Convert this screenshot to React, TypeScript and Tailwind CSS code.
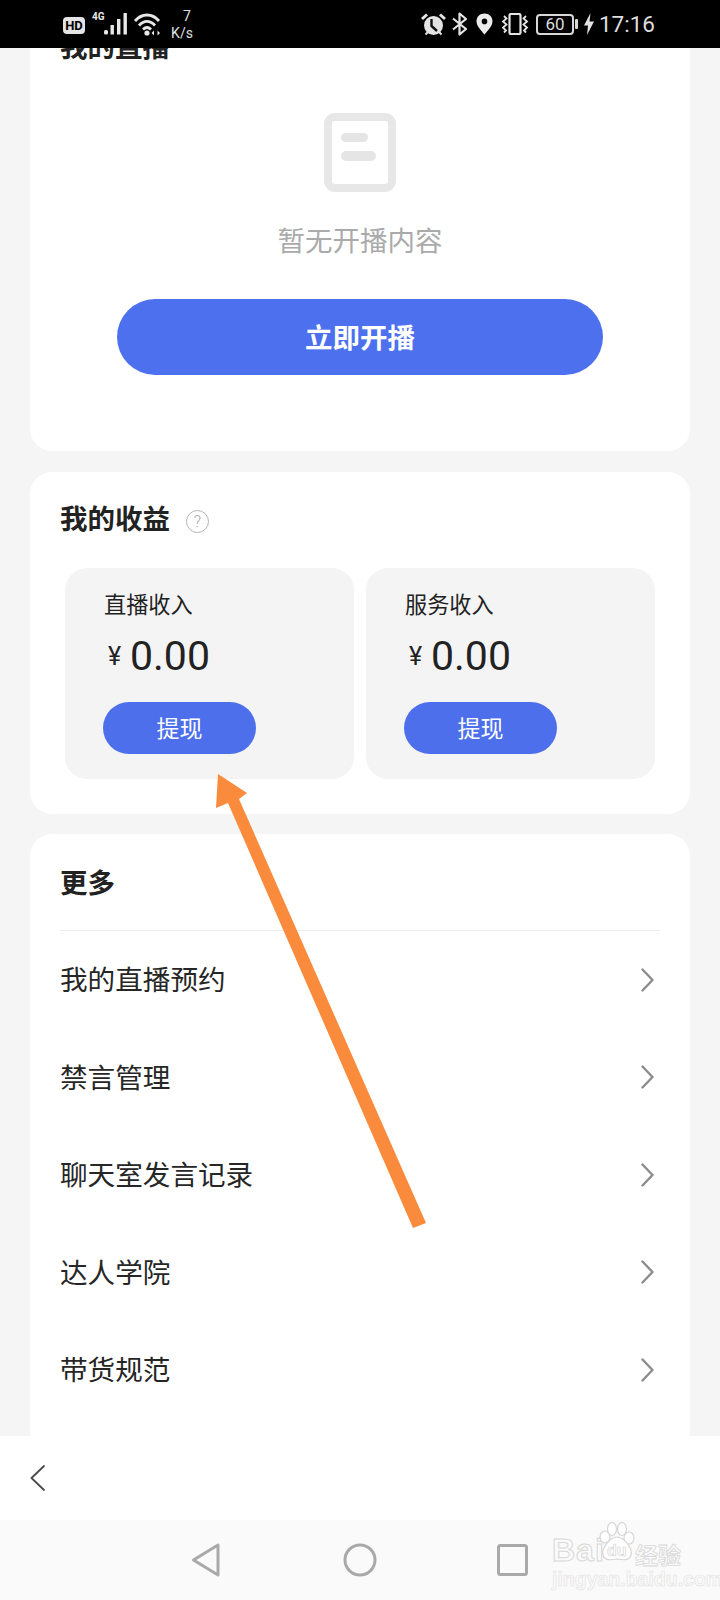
import React from "react";

const ff = "font-['Roboto','Noto_Sans_CJK_SC',sans-serif]";

function Chevron() {
  return (
    <svg width="13" height="24" viewBox="0 0 13 24" fill="none" stroke="#8c8c8c" strokeWidth="2.4" strokeLinecap="round" strokeLinejoin="round">
      <path d="M1.5 1.5 L11.5 12 L1.5 22.5" />
    </svg>
  );
}

function Signal() {
  return (
    <svg width="24" height="22" viewBox="0 0 24 22" fill="#e8e8e8">
      <rect x="0" y="17" width="4" height="4.5" rx="1.5" />
      <rect x="6.5" y="12" width="3.4" height="9.5" />
      <rect x="13" y="6" width="3.4" height="15.5" />
      <rect x="19.5" y="0" width="3.4" height="21.5" />
    </svg>
  );
}

function Wifi() {
  return (
    <svg width="28" height="23" viewBox="0 0 28 23" fill="none" stroke="#e8e8e8" strokeWidth="2.8">
      <path d="M1 8 C8 0 18 0 25 8" />
      <path d="M5 12.5 C10 7 16 7 21 12.5" />
      <path d="M9 16.5 C11.5 14 14.5 14 17 16.5" />
      <circle cx="13" cy="20" r="2.6" fill="#e8e8e8" stroke="none" />
      <path d="M20 17.5v5l-2.5-2.5zM23.5 17.5v5l2.5-2.5z" fill="#e8e8e8" stroke="none" />
    </svg>
  );
}

function Alarm() {
  return (
    <svg width="25" height="23" viewBox="0 0 25 23" fill="none">
      <circle cx="12.5" cy="12.5" r="9.5" fill="#e4e4e4" />
      <path d="M1 6 L6 1.5 M24 6 L19 1.5" stroke="#e4e4e4" strokeWidth="3" />
      <path d="M4.5 21.5 L7 19 M20.5 21.5 L18 19" stroke="#e4e4e4" strokeWidth="2" />
      <path d="M10.5 6 V13 L16 18" stroke="#111" strokeWidth="2.4" />
    </svg>
  );
}

function Bluetooth() {
  return (
    <svg width="16" height="24" viewBox="0 0 16 24" fill="none" stroke="#e4e4e4" strokeWidth="2.2" strokeLinejoin="round">
      <path d="M1 6.5 L14 17 L7.5 22.5 V1.5 L14 7 L1 17.5" />
    </svg>
  );
}

function Pin() {
  return (
    <svg width="17" height="22" viewBox="0 0 17 22">
      <path fillRule="evenodd" fill="#ececec" d="M8.5 0.5 C13.2 0.5 16.5 3.8 16.5 8.3 C16.5 13 12 17.5 8.5 21.5 C5 17.5 0.5 13 0.5 8.3 C0.5 3.8 3.8 0.5 8.5 0.5 Z M8.5 5.6 A2.8 2.8 0 1 0 8.5 11.2 A2.8 2.8 0 1 0 8.5 5.6 Z" />
    </svg>
  );
}

function Vibrate() {
  return (
    <svg width="28" height="22" viewBox="0 0 28 22" fill="none" stroke="#e4e4e4" strokeWidth="1.8">
      <rect x="8.5" y="1" width="11" height="20" rx="1.5" strokeWidth="2.2" />
      <path d="M3 3 L5.5 5.5 L2 8.5 L5.5 11.5 L2 14.5 L5 17.5 L3 19.5" />
      <path d="M25 3 L22.5 5.5 L26 8.5 L22.5 11.5 L26 14.5 L23 17.5 L25 19.5" />
    </svg>
  );
}

function Bolt() {
  return (
    <svg width="10" height="22" viewBox="0 0 10 22" fill="#e4e4e4">
      <path d="M6.5 0 L0 12.5 H4 L3 22 L10 8.5 H5.5 Z" />
    </svg>
  );
}

function StatusBar() {
  return (
    <div className={`h-[48px] shrink-0 bg-black flex items-center justify-between pl-[63px] pr-[65px] ${ff}`}>
      <div className="flex items-center">
        <div className="w-[22px] h-[17px] rounded-[4px] bg-[#e4e4e4] text-black text-[13px] leading-[17px] font-bold text-center mt-[2px]">HD</div>
        <div className="relative w-[37px] h-[24px] ml-[7px]">
          <span className="absolute left-0 top-0 text-[10px] leading-[10px] font-bold text-[#e8e8e8]">4G</span>
          <div className="absolute left-[12px] top-[1px]"><Signal /></div>
        </div>
        <div className="ml-[5px] mt-[1px]"><Wifi /></div>
        <div className="ml-[8px] w-[24px] flex flex-col items-center text-[#e0e0e0] leading-[15px] mt-[1px]">
          <span className="ml-[10px] mb-[2px] text-[14px]">7</span>
          <span className="text-[14px]">K/s</span>
        </div>
      </div>
      <div className="flex items-center">
        <Alarm />
        <div className="ml-[6px]"><Bluetooth /></div>
        <div className="ml-[8px]"><Pin /></div>
        <div className="ml-[8px]"><Vibrate /></div>
        <div className="ml-[7px] flex items-center">
          <div className="w-[38px] h-[21px] border-2 border-[#d8d8d8] rounded-[4px] text-[#dcdcdc] text-[17px] leading-[17px] text-center">60</div>
          <div className="w-[3px] h-[10px] bg-[#d8d8d8] ml-[1px] rounded-[1px]" />
        </div>
        <div className="ml-[6px]"><Bolt /></div>
        <span className="ml-[5px] text-[22.5px] leading-[28px] text-[#dedede]">17:16</span>
      </div>
    </div>
  );
}

function EarningCard({ label }: { label: string }) {
  return (
    <div className="w-[289px] h-[211px] rounded-[22px] bg-[#f4f4f5] pt-[22px] pl-[38px]">
      <div className="h-[30px] text-[22.2px] leading-[30px] text-[#222] ml-[1px]">{label}</div>
      <div className="h-[50px] mt-[11px] flex items-center text-[#222] ml-[5px]">
        <span className="text-[25px] leading-[50px] w-[22px] mt-[2px]">¥</span>
        <span className="text-[41px] leading-[52px]">0.00</span>
      </div>
      <div className="mt-[21px] w-[153px] h-[52px] rounded-full bg-[#4d6fec] text-white text-[23px] leading-[56px] text-center">提现</div>
    </div>
  );
}

function Row({ label }: { label: string }) {
  return (
    <div className="h-[97.5px] flex items-center justify-between pr-[6px] text-[27.6px] text-[#262626]">
      <span className="mt-[2px]">{label}</span>
      <Chevron />
    </div>
  );
}

export default function App() {
  return (
    <div className={`relative w-[720px] h-[1600px] overflow-hidden flex flex-col bg-[#f5f5f5] ${ff}`}>
      <StatusBar />
      <main className="flex-1 min-h-0 overflow-hidden px-[30px]">
        <section className="-mt-[20px] h-[423px] rounded-b-[22px] bg-white flex flex-col items-center">
          <div className="w-full pl-[30px] h-[40px] text-[27.5px] leading-[40px] font-bold text-[#222]">我的直播</div>
          <svg className="mt-[45px]" width="72" height="79" viewBox="0 0 72 79" fill="none">
            <rect x="4" y="4" width="64" height="71" rx="7" stroke="#e7e7e7" strokeWidth="8" />
            <rect x="17" y="20" width="27" height="9" rx="4.5" fill="#e5e5e5" />
            <rect x="17" y="38" width="35" height="10" rx="5" fill="#e5e5e5" />
          </svg>
          <div className="mt-[28px] h-[40px] text-[27.5px] leading-[44px] text-[#aaaaaa]">暂无开播内容</div>
          <div className="mt-[39px] w-[486px] h-[76px] rounded-full bg-[#4d70ee] text-white text-[27.5px] leading-[80px] font-bold text-center">立即开播</div>
        </section>

        <section className="mt-[21px] h-[342px] rounded-[22px] bg-white pt-[28px] px-[35px]">
          <div className="flex items-center h-[40px] ml-[-5px]">
            <span className="text-[27.5px] leading-[42px] font-bold text-[#222]">我的收益</span>
            <span className="ml-[16px] mt-[2px] w-[23px] h-[23px] rounded-full border border-[#b5b5b5] text-[#aaa] text-[16px] font-light leading-[21px] text-center">?</span>
          </div>
          <div className="mt-[28px] flex gap-[12px]">
            <EarningCard label="直播收入" />
            <EarningCard label="服务收入" />
          </div>
        </section>

        <section className="mt-[20px] rounded-t-[22px] bg-white px-[30px] pt-[29px] h-[700px]">
          <div className="h-[40px] text-[27.5px] leading-[42px] font-bold text-[#222]">更多</div>
          <div className="mt-[27px] h-px bg-[#ececec]" />
          <Row label="我的直播预约" />
          <Row label="禁言管理" />
          <Row label="聊天室发言记录" />
          <Row label="达人学院" />
          <Row label="带货规范" />
        </section>
      </main>

      <div className="h-[84px] shrink-0 bg-white flex items-center pl-[30px]">
        <svg width="15" height="26" viewBox="0 0 15 26" fill="none" stroke="#4a4a4a" strokeWidth="1.8" strokeLinecap="round" strokeLinejoin="round">
          <path d="M14 1 L1.5 13 L14 25" />
        </svg>
      </div>

      <div className="h-[80px] shrink-0 bg-[#fafafa] flex items-start pt-[23px] pl-[191px]">
        <svg width="30" height="34" viewBox="0 0 30 34" fill="none" stroke="#a9a9a9" strokeWidth="3" strokeLinejoin="round">
          <path d="M27 2 V32 L2.5 17 Z" />
        </svg>
        <svg className="ml-[122px]" width="34" height="34" viewBox="0 0 34 34" fill="none" stroke="#a9a9a9" strokeWidth="3">
          <circle cx="17" cy="17" r="15" />
        </svg>
        <svg className="ml-[120px] mt-[1px]" width="31" height="32" viewBox="0 0 31 32" fill="none" stroke="#a9a9a9" strokeWidth="3">
          <rect x="1.5" y="1.5" width="28" height="29" rx="2" />
        </svg>
      </div>

      {/* Baidu watermark over the nav bar */}
      <div className="absolute left-[552px] top-[1522px] w-[130px] h-[64px] text-transparent">
        <span className="absolute left-0 top-[13px] text-[32px] leading-[30px] font-bold tracking-[1px] font-['Liberation_Sans',sans-serif] [-webkit-text-stroke:1px_#d8d8d8]">Bai</span>
        <svg className="absolute left-[45px] top-0" width="40" height="40" viewBox="0 0 40 40" fill="none" stroke="#d6d6d6" strokeWidth="1.2">
          <ellipse cx="8" cy="15" rx="5" ry="6" fill="#fff" />
          <ellipse cx="15" cy="7" rx="4.5" ry="6.5" fill="#fff" />
          <ellipse cx="25" cy="7" rx="4.5" ry="6.5" fill="#fff" />
          <ellipse cx="32" cy="16" rx="5" ry="6" fill="#fff" />
          <path d="M20 15 C27 15 36 27 34 33 C32 39 26 38 20 37 C14 38 8 39 6 33 C4 27 13 15 20 15 Z" fill="#fff" />
        </svg>
        <span className="absolute left-[55px] top-[21px] text-[16px] leading-[16px] font-bold font-['Liberation_Sans',sans-serif] [-webkit-text-stroke:0.7px_#d6d6d6]">du</span>
        <span className="absolute left-[83px] top-[20px] text-[23px] leading-[24px] font-bold font-['Noto_Sans_CJK_SC',sans-serif] [-webkit-text-stroke:0.8px_#d8d8d8]">经验</span>
        <span className="absolute left-0 top-[48px] text-[19.5px] leading-[18px] font-bold whitespace-nowrap font-['Liberation_Sans',sans-serif] [-webkit-text-stroke:0.6px_#e2e2e2]">jingyan.baidu.com</span>
      </div>

      {/* Orange annotation arrow */}
      <svg className="absolute left-0 top-0 pointer-events-none" width="720" height="1600" viewBox="0 0 720 1600">
        <path fill="#fb8b3c" d="M218 774 L247 793 L239 799 L426 1223 L413 1228 L228 803 L216 808 Z" />
      </svg>
    </div>
  );
}
